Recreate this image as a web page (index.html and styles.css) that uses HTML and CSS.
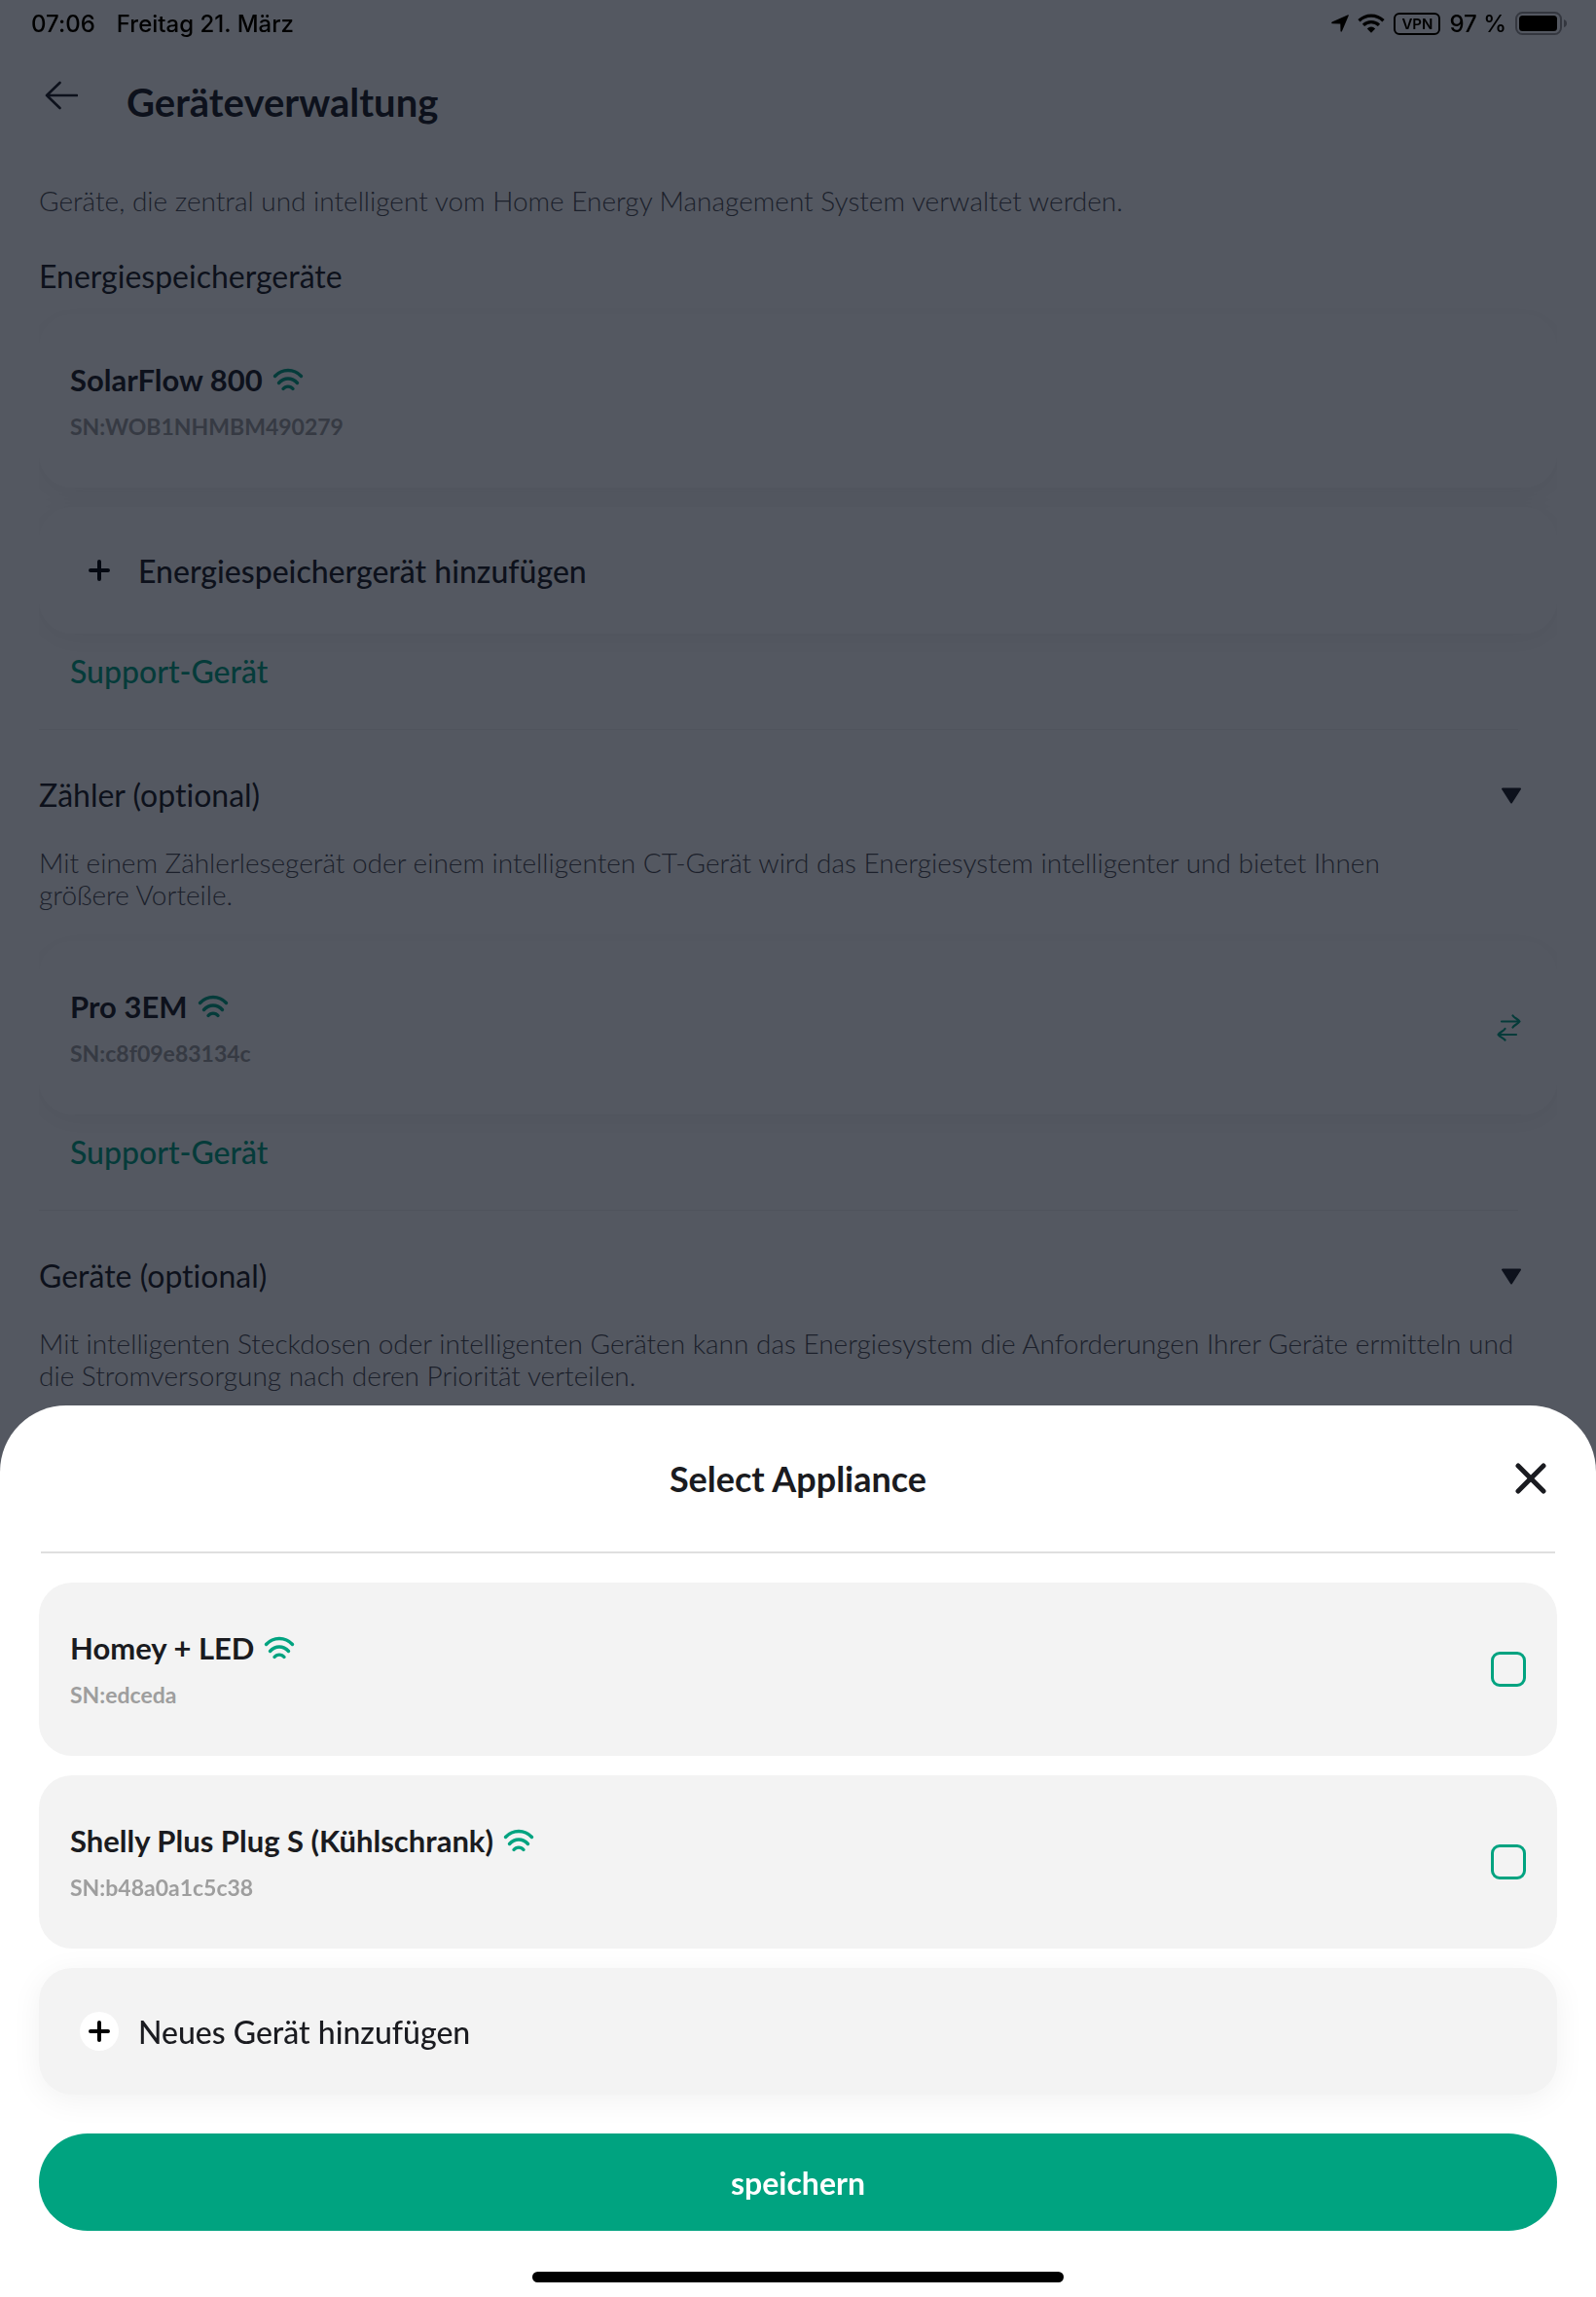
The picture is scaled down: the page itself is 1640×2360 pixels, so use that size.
FILE: index.html
```html
<!DOCTYPE html>
<html lang="de">
<head>
    <meta charset="utf-8">
    <meta name="viewport" content="width=device-width, initial-scale=1">
    <title>Geräteverwaltung</title>
    <link rel="stylesheet" href="styles.css">
</head>
<body>
    <!-- Symbole, die mehrfach vorkommen -->
    <svg class="symbols" aria-hidden="true">
        <symbol id="wifi" viewBox="0 0 32 24">
            <path d="M2.500 8.500C10 0.500 22 0.500 29.500 8.500M6.500 15.500C12 9.500 20 9.500 25.500 15.500M11 21.500C13.500 18.300 18.500 18.300 21 21.500" fill="none" stroke="currentColor" stroke-width="3.400" stroke-linecap="round"/>
        </symbol>
        <symbol id="plus" viewBox="0 0 40 40">
            <path d="M20 11v18M11 20h18" fill="none" stroke="#000" stroke-width="4" stroke-linecap="round"/>
        </symbol>
        <symbol id="triangle" viewBox="0 0 22 17">
            <path d="M2 1.500h18L11 15.500z" fill="currentColor" stroke="currentColor" stroke-width="2" stroke-linejoin="round"/>
        </symbol>
    </svg>

    <div class="status-bar">
        <span>07:06</span>
        <span class="date">Freitag 21. März</span>
        <div class="status-icons">
            <svg width="18" height="18" viewBox="0 0 18 18"><path d="M17.200 0.300Q18.200 0 17.700 1.200L11 17Q10 18.500 9.500 17L9.300 9.500 1 9.200Q-0.500 8.600 0.800 7.500z"/></svg>
            <svg width="28" height="20" viewBox="0 0 28 20"><path d="M1.500 7.200C8.500 0.400 19.500 0.400 26.500 7.200M6 11.900C10.500 7.600 17.500 7.600 22 11.900" fill="none" stroke="#000" stroke-width="3.300"/><path d="M9.800 15.400Q14 11.800 18.200 15.400L14 19.800z"/></svg>
            <span class="vpn">VPN</span>
            <span>97 %</span>
            <svg width="53" height="24" viewBox="0 0 53 24"><rect x="1" y="1" width="46" height="22" rx="6.500" fill="none" stroke="#34373f" stroke-width="2"/><rect x="4" y="4" width="39" height="16" rx="3.500"/><path d="M50 8Q53 9 53 12Q53 15 50 16z" fill="#34373f"/></svg>
        </div>
    </div>

    <main>
        <header>
            <button class="icon-button" aria-label="Zurück">
                <svg width="34" height="34" viewBox="0 0 34 34"><path d="M33 17H2M15.500 4L2 17l13.500 13" fill="none" stroke="currentColor" stroke-width="2.600" stroke-linecap="round" stroke-linejoin="round"/></svg>
            </button>
            <h1>Geräteverwaltung</h1>
        </header>

        <p class="description intro">Geräte, die zentral und intelligent vom Home Energy Management System verwaltet werden.</p>

        <section>
            <h2>Energiespeichergeräte</h2>
            <div class="card">
                <div>
                    <h3>SolarFlow 800 <svg class="wifi"><use href="#wifi"/></svg></h3>
                    <p class="serial">SN:WOB1NHMBM490279</p>
                </div>
            </div>
            <button class="card add"><svg class="plus"><use href="#plus"/></svg>Energiespeichergerät hinzufügen</button>
            <a class="support" href="#">Support-Gerät</a>
        </section>
        <hr>

        <section>
            <div class="section-title">
                <h2>Zähler (optional)</h2>
                <button class="icon-button" aria-label="Zähler einklappen"><svg class="triangle"><use href="#triangle"/></svg></button>
            </div>
            <p class="description narrow">Mit einem Zählerlesegerät oder einem intelligenten CT-Gerät wird das Energiesystem intelligenter und bietet Ihnen größere Vorteile.</p>
            <div class="card">
                <div>
                    <h3>Pro 3EM <svg class="wifi"><use href="#wifi"/></svg></h3>
                    <p class="serial">SN:c8f09e83134c</p>
                </div>
                <button class="icon-button swap" aria-label="Tauschen">
                    <svg width="26" height="28" viewBox="0 0 26 28"><path d="M5 7.500h18M16.500 1.500C18 4 22 5 23.500 7.500C22 10 18 11 16.500 13.500M20 21H2M8.500 15C7 17.500 3 18.500 1.500 21C3 23.500 7 24.500 8.500 26.500" fill="none" stroke="currentColor" stroke-width="2.200" stroke-linecap="round" stroke-linejoin="round"/></svg>
                </button>
            </div>
            <a class="support" href="#">Support-Gerät</a>
        </section>
        <hr>

        <section>
            <div class="section-title">
                <h2>Geräte (optional)</h2>
                <button class="icon-button" aria-label="Geräte einklappen"><svg class="triangle"><use href="#triangle"/></svg></button>
            </div>
            <p class="description">Mit intelligenten Steckdosen oder intelligenten Geräten kann das Energiesystem die Anforderungen Ihrer Geräte ermitteln und die Stromversorgung nach deren Priorität verteilen.</p>
        </section>
    </main>

    <!-- Auswahl von unten -->
    <div class="overlay">
        <form class="sheet" role="dialog" aria-labelledby="sheet-title">
            <div class="sheet-header">
                <h2 id="sheet-title">Select Appliance</h2>
                <button type="button" class="icon-button" aria-label="Schließen">
                    <svg width="32" height="32" viewBox="0 0 32 32"><path d="M3 3l26 26M29 3L3 29" fill="none" stroke="currentColor" stroke-width="5" stroke-linecap="round"/></svg>
                </button>
            </div>
            <div class="sheet-body">
                <label class="card">
                    <span>
                        <span class="name">Homey + LED <svg class="wifi"><use href="#wifi"/></svg></span>
                        <span class="serial">SN:edceda</span>
                    </span>
                    <input type="checkbox">
                </label>
                <label class="card">
                    <span>
                        <span class="name">Shelly Plus Plug S (Kühlschrank) <svg class="wifi"><use href="#wifi"/></svg></span>
                        <span class="serial">SN:b48a0a1c5c38</span>
                    </span>
                    <input type="checkbox">
                </label>
                <button type="button" class="card add"><svg class="plus"><use href="#plus"/></svg>Neues Gerät hinzufügen</button>
                <button type="submit" class="save">speichern</button>
            </div>
            <div class="home-indicator"></div>
        </form>
    </div>
</body>
</html>
```
FILE: styles.css
```css
* {
    box-sizing: border-box;
}

body {
    margin: 0;
    background-color: #fff;
    color: #1a1b20;
    font-family: Lato, "Open Sans", sans-serif;
    font-variant-ligatures: none;
    overflow: hidden;
}

h1, h2, h3, p {
    margin: 0;
}

button {
    font: inherit;
    color: inherit;
    border: none;
    background: none;
    padding: 0;
    cursor: pointer;
}

hr {
    height: 1px;
    margin: 39px 40px 47px 0;
    border: none;
    background-color: #f3f3f3;
}

section {
    overflow-x: clip;
}

.symbols {
    display: none;
}

.icon-button {
    display: flex;
}

/* Statusleiste, liegt über der Abdunkelung */
.status-bar {
    position: relative;
    z-index: 3;
    display: flex;
    align-items: center;
    height: 48px;
    padding: 0 30px 0 32px;
    color: #000;
    font-family: Inter, sans-serif;
    font-size: 24px;
    font-weight: 500;
}

.date {
    margin-left: 22px;
}

.status-icons {
    display: flex;
    align-items: center;
    gap: 9px;
    margin-left: auto;
}

.vpn {
    border: 2px solid #000;
    border-radius: 6px;
    padding: 0 6px;
    font-size: 15px;
    font-weight: 600;
    line-height: 19px;
}

main {
    padding: 33px 40px 0;
}

header {
    display: flex;
    align-items: flex-start;
    gap: 50px;
    padding-left: 6px;
}

h1 {
    font-size: 40px;
    font-weight: 700;
    line-height: 48px;
}

h2 {
    font-size: 32px;
    font-weight: 400;
    line-height: 40px;
}

.description {
    color: #4c4c50;
    font-size: 28px;
    font-weight: 300;
    line-height: 33px;
    margin: 33px 20px 31px 0;
}

.intro {
    margin: 61px 0 41px;
}

.narrow {
    max-width: 93%;
}

.section-title {
    display: flex;
    justify-content: space-between;
    align-items: center;
    padding-right: 36px;
}

.triangle {
    width: 22px;
    height: 17px;
}

.card {
    display: flex;
    align-items: center;
    justify-content: space-between;
    width: 100%;
    min-height: 178px;
    padding: 0 32px;
    border-radius: 34px;
    background-color: #fff;
    box-shadow: 0 6px 32px rgba(0, 0, 0, 0.06);
}

h2 + .card {
    margin-top: 19px;
}

.card h3, .name {
    display: flex;
    align-items: center;
    gap: 10px;
    margin-bottom: 12px;
    font-size: 31px;
    font-weight: 700;
    line-height: 40px;
}

.serial {
    display: block;
    color: #9e9e9e;
    font-size: 23px;
    font-weight: 700;
    line-height: 32px;
}

.wifi {
    width: 32px;
    height: 24px;
    color: #00a380;
}

.swap {
    margin-right: 4px;
    color: #00a380;
}

.add {
    justify-content: flex-start;
    gap: 20px;
    min-height: 130px;
    margin-top: 20px;
    padding: 0 42px;
    font-size: 32px;
    font-weight: 500;
}

.plus {
    width: 40px;
    height: 40px;
    border-radius: 50%;
    background-color: #fff;
}

.support {
    display: block;
    margin: 19px 32px 0;
    color: #00a380;
    font-size: 32px;
    font-weight: 500;
    line-height: 40px;
    text-decoration: none;
}

.overlay {
    position: fixed;
    top: 0;
    right: 0;
    bottom: 0;
    left: 0;
    z-index: 2;
    display: flex;
    flex-direction: column;
    justify-content: flex-end;
    background-color: rgba(7, 13, 26, 0.69);
}

.sheet {
    border-radius: 68px 68px 0 0;
    background-color: #fff;
}

.sheet-header {
    display: grid;
    grid-template-columns: 32px 1fr 32px;
    align-items: center;
    height: 152px;
    margin: 0 42px;
    padding: 0 9px;
    border-bottom: 2px solid #dfdfdf;
}

.sheet-header h2 {
    grid-column: 2;
    font-size: 36px;
    font-weight: 700;
    text-align: center;
}

.sheet-body {
    display: flex;
    flex-direction: column;
    gap: 20px;
    padding: 30px 40px 42px;
}

.sheet .card {
    margin: 0;
    background-color: #f3f3f3;
    box-shadow: none;
}

.sheet .add {
    box-shadow: 0 6px 32px rgba(0, 0, 0, 0.06);
}

input[type="checkbox"] {
    appearance: none;
    width: 36px;
    height: 36px;
    margin: 0;
    border: 3px solid #00a380;
    border-radius: 9px;
}

input[type="checkbox"]:checked {
    background-color: #00a380;
}

.save {
    height: 100px;
    margin-top: 20px;
    border-radius: 50px;
    background-color: #00a380;
    color: #fff;
    font-size: 32px;
    font-weight: 700;
}

.home-indicator {
    width: 33.3%;
    height: 11px;
    margin: 0 auto 15px;
    border-radius: 6px;
    background-color: #000;
}
```
